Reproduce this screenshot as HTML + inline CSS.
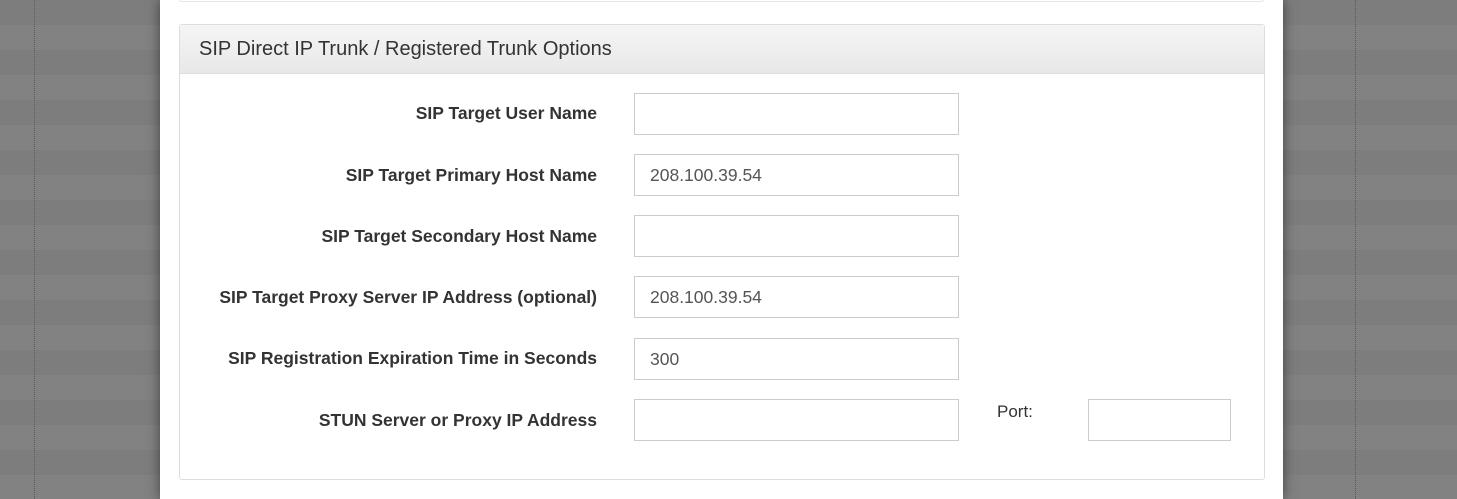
<!DOCTYPE html>
<html><head><style>
*{box-sizing:border-box;margin:0;padding:0}
body{width:1457px;height:499px;overflow:hidden;position:relative;font-family:"Liberation Sans",sans-serif;
background:repeating-linear-gradient(#7d7d7d 0 25px,#828282 25px 50px)}
.dot{position:absolute;top:0;bottom:0;border-left:1px dotted #5a5a5a}
.modal{position:absolute;left:160px;width:1123px;top:0;height:499px;background:#fff;box-shadow:0 0 12px rgba(0,0,0,.5)}
.top{position:absolute;left:19px;width:1085px;top:-10px;height:12px;border:1px solid #e3e3e3;border-radius:3px}
.panel{position:absolute;left:19px;top:24px;width:1086px;height:456px;border:1px solid #ddd;border-radius:3px}
.hd{height:49px;background:linear-gradient(#f5f5f5,#e8e8e8);border-bottom:1px solid #ddd;font-size:20px;color:#333;padding:13px 0 0 19px}
.lbl{position:absolute;right:667px;font-weight:bold;font-size:17.5px;color:#333;white-space:nowrap}
.in{position:absolute;left:454px;width:325px;height:42px;border:1px solid #ccc;font-size:17.5px;color:#555;padding:10px 15px}
</style></head><body>
<div class="dot" style="left:34px"></div><div class="dot" style="left:1355px"></div>
<div class="modal"><div class="top"></div>
<div class="panel"><div class="hd">SIP Direct IP Trunk / Registered Trunk Options</div>
<div class="lbl" style="top:78px">SIP Target User Name</div><div class="in" style="top:68px"></div>
<div class="lbl" style="top:140px">SIP Target Primary Host Name</div><div class="in" style="top:129px">208.100.39.54</div>
<div class="lbl" style="top:201px">SIP Target Secondary Host Name</div><div class="in" style="top:190px"></div>
<div class="lbl" style="top:262px">SIP Target Proxy Server IP Address (optional)</div><div class="in" style="top:251px">208.100.39.54</div>
<div class="lbl" style="top:323px">SIP Registration Expiration Time in Seconds</div><div class="in" style="top:313px">300</div>
<div class="lbl" style="top:385px">STUN Server or Proxy IP Address</div><div class="in" style="top:374px"></div>
<div style="position:absolute;left:817px;top:377px;font-size:17px;color:#333">Port:</div>
<div class="in" style="left:908px;width:143px;top:374px"></div>
</div></div>
</body></html>
